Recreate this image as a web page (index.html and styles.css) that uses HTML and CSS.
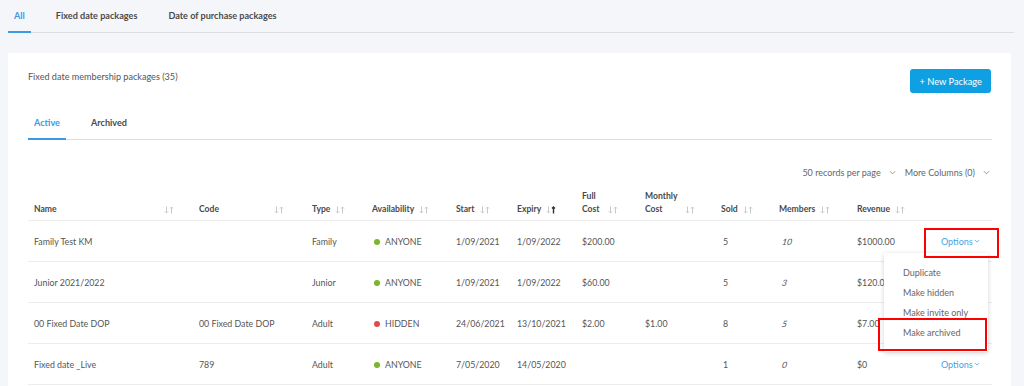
FILE: index.html
```html
<!DOCTYPE html>
<html lang="en">
<head>
    <meta charset="UTF-8">
    <meta name="viewport" content="width=device-width, initial-scale=1.0">
    <title>Membership Packages</title>
    <link rel="stylesheet" href="styles.css">
</head>
<body>
    <div class="page">
        <div class="tabs top-tabs">
            <div class="tab active">All</div>
            <div class="tab">Fixed date packages</div>
            <div class="tab">Date of purchase packages</div>
        </div>

        <div class="card">
            <div class="card-head">
                <div class="card-title">Fixed date membership packages (35)</div>
                <button class="btn">+ New Package</button>
            </div>

            <div class="tabs sub-tabs">
                <div class="tab active">Active</div>
                <div class="tab">Archived</div>
            </div>

            <div class="table-tools">
                <span>50 records per page</span>
                <svg class="chev" viewBox="0 0 8 5"><polyline points="1,1 4,4 7,1"/></svg>
                <span class="more">More Columns (0)</span>
                <svg class="chev" viewBox="0 0 8 5"><polyline points="1,1 4,4 7,1"/></svg>
            </div>

            <table class="packages">
                <colgroup>
                    <col style="width:165px"><col style="width:113px"><col style="width:60px">
                    <col style="width:84px"><col style="width:61px"><col style="width:65px">
                    <col style="width:63px"><col style="width:76px"><col style="width:58px">
                    <col style="width:78px"><col style="width:84px"><col style="width:57px">
                </colgroup>
                <thead>
                    <tr>
                        <th><div class="th-in"><span class="label w-name">Name</span><svg class="sort" viewBox="0 0 10 8"><path d="M2.5 0.5v6.5M1 5.5l1.5 1.5l1.5-1.5"/><path class="up" d="M7.5 7.5v-6.5M6 2.5l1.5-1.5l1.5 1.5"/></svg></div></th>
                        <th><div class="th-in"><span class="label w-code">Code</span><svg class="sort" viewBox="0 0 10 8"><path d="M2.5 0.5v6.5M1 5.5l1.5 1.5l1.5-1.5"/><path class="up" d="M7.5 7.5v-6.5M6 2.5l1.5-1.5l1.5 1.5"/></svg></div></th>
                        <th><div class="th-in"><span class="label">Type</span><svg class="sort" viewBox="0 0 10 8"><path d="M2.5 0.5v6.5M1 5.5l1.5 1.5l1.5-1.5"/><path class="up" d="M7.5 7.5v-6.5M6 2.5l1.5-1.5l1.5 1.5"/></svg></div></th>
                        <th><div class="th-in"><span class="label">Availability</span><svg class="sort" viewBox="0 0 10 8"><path d="M2.5 0.5v6.5M1 5.5l1.5 1.5l1.5-1.5"/><path class="up" d="M7.5 7.5v-6.5M6 2.5l1.5-1.5l1.5 1.5"/></svg></div></th>
                        <th><div class="th-in"><span class="label">Start</span><svg class="sort" viewBox="0 0 10 8"><path d="M2.5 0.5v6.5M1 5.5l1.5 1.5l1.5-1.5"/><path class="up" d="M7.5 7.5v-6.5M6 2.5l1.5-1.5l1.5 1.5"/></svg></div></th>
                        <th><div class="th-in"><span class="label">Expiry</span><svg class="sort sorted" viewBox="0 0 10 8"><path d="M2.5 0.5v6.5M1 5.5l1.5 1.5l1.5-1.5"/><path class="up" d="M7.5 7.5v-6.5M6 2.5l1.5-1.5l1.5 1.5"/></svg></div></th>
                        <th><div class="th-in"><span class="label w-full">Full<br>Cost</span><svg class="sort" viewBox="0 0 10 8"><path d="M2.5 0.5v6.5M1 5.5l1.5 1.5l1.5-1.5"/><path class="up" d="M7.5 7.5v-6.5M6 2.5l1.5-1.5l1.5 1.5"/></svg></div></th>
                        <th><div class="th-in"><span class="label w-monthly">Monthly<br>Cost</span><svg class="sort" viewBox="0 0 10 8"><path d="M2.5 0.5v6.5M1 5.5l1.5 1.5l1.5-1.5"/><path class="up" d="M7.5 7.5v-6.5M6 2.5l1.5-1.5l1.5 1.5"/></svg></div></th>
                        <th><div class="th-in"><span class="label">Sold</span><svg class="sort" viewBox="0 0 10 8"><path d="M2.5 0.5v6.5M1 5.5l1.5 1.5l1.5-1.5"/><path class="up" d="M7.5 7.5v-6.5M6 2.5l1.5-1.5l1.5 1.5"/></svg></div></th>
                        <th><div class="th-in"><span class="label">Members</span><svg class="sort" viewBox="0 0 10 8"><path d="M2.5 0.5v6.5M1 5.5l1.5 1.5l1.5-1.5"/><path class="up" d="M7.5 7.5v-6.5M6 2.5l1.5-1.5l1.5 1.5"/></svg></div></th>
                        <th><div class="th-in"><span class="label">Revenue</span><svg class="sort" viewBox="0 0 10 8"><path d="M2.5 0.5v6.5M1 5.5l1.5 1.5l1.5-1.5"/><path class="up" d="M7.5 7.5v-6.5M6 2.5l1.5-1.5l1.5 1.5"/></svg></div></th>
                        <th></th>
                    </tr>
                </thead>
                <tbody>
                    <tr>
                        <td>Family Test KM</td>
                        <td></td>
                        <td>Family</td>
                        <td><span class="dot green"></span>ANYONE</td>
                        <td>1/09/2021</td>
                        <td>1/09/2022</td>
                        <td>$200.00</td>
                        <td></td>
                        <td class="sold">5</td>
                        <td class="members"><em>10</em></td>
                        <td>$1000.00</td>
                        <td class="opt-cell">
                            <span class="options">Options<svg class="chev blue" viewBox="0 0 8 5"><polyline points="1,1 4,4 7,1"/></svg></span>
                            <div class="mark mark-options"></div>
                            <div class="menu">
                                <div class="menu-item">Duplicate</div>
                                <div class="menu-item">Make hidden</div>
                                <div class="menu-item">Make invite only</div>
                                <div class="menu-item">Make archived</div>
                                <div class="mark mark-archived"></div>
                            </div>
                        </td>
                    </tr>
                    <tr>
                        <td>Junior 2021/2022</td>
                        <td></td>
                        <td>Junior</td>
                        <td><span class="dot green"></span>ANYONE</td>
                        <td>1/09/2021</td>
                        <td>1/09/2022</td>
                        <td>$60.00</td>
                        <td></td>
                        <td class="sold">5</td>
                        <td class="members"><em>3</em></td>
                        <td>$120.00</td>
                        <td class="opt-cell"></td>
                    </tr>
                    <tr>
                        <td>00 Fixed Date DOP</td>
                        <td>00 Fixed Date DOP</td>
                        <td>Adult</td>
                        <td><span class="dot red"></span>HIDDEN</td>
                        <td>24/06/2021</td>
                        <td>13/10/2021</td>
                        <td>$2.00</td>
                        <td>$1.00</td>
                        <td class="sold">8</td>
                        <td class="members"><em>5</em></td>
                        <td>$7.00</td>
                        <td class="opt-cell"></td>
                    </tr>
                    <tr>
                        <td>Fixed date _Live</td>
                        <td>789</td>
                        <td>Adult</td>
                        <td><span class="dot green"></span>ANYONE</td>
                        <td>7/05/2020</td>
                        <td>14/05/2020</td>
                        <td></td>
                        <td></td>
                        <td class="sold">1</td>
                        <td class="members"><em>0</em></td>
                        <td>$0</td>
                        <td class="opt-cell">
                            <span class="options">Options<svg class="chev blue" viewBox="0 0 8 5"><polyline points="1,1 4,4 7,1"/></svg></span>
                        </td>
                    </tr>
                </tbody>
            </table>
        </div>
    </div>
</body>
</html>
```

FILE: styles.css
```css
body {
    margin: 0;
    background-color: #f5f6f9;
    font-family: Lato, "Open Sans", Arial, sans-serif;
    font-size: 9px;
    color: #555;
    overflow: hidden;
}
.page {
    padding: 0 10px 0 8px;
}
.tabs {
    display: flex;
    gap: 19px;
    border-bottom: 1px solid #dcdde0;
}
.tab {
    padding: 0 6px;
    line-height: 31px;
    font-size: 9.1px;
    font-weight: 700;
    color: #4a4a4a;
    border-bottom: 2px solid transparent;
    margin-bottom: -1px;
}
.tab.active {
    color: #3b9ae6;
    border-bottom-color: #3b9ae6;
}
.card {
    margin-top: 20px;
    margin-right: 3px;
    background: #fff;
    padding: 16px 19px 20px 20px;
    min-height: 400px;
}
.card-head {
    display: flex;
    justify-content: space-between;
    align-items: flex-start;
    padding-right: 1px;
}
.card-title {
    margin-top: 2px;
    font-size: 9.1px;
    line-height: 12px;
    color: #555;
}
.btn {
    height: 24px;
    padding: 0 9px;
    border: none;
    border-radius: 3px;
    background-color: #0ea0e2;
    color: #fff;
    font-family: inherit;
    font-size: 9.3px;
    cursor: pointer;
}
.sub-tabs {
    margin-top: 14px;
}
.table-tools {
    display: flex;
    justify-content: flex-end;
    align-items: center;
    margin-top: 22px;
    height: 20px;
    padding-right: 2px;
    font-size: 9px;
    color: #666;
}
.table-tools .more {
    margin-left: 9px;
}
.chev {
    width: 7px;
    height: 5px;
    margin-left: 8px;
    fill: none;
    stroke: #888;
    stroke-width: 1;
}
.chev.blue {
    stroke: #3ba6e8;
    margin-left: 1px;
    width: 6px;
    height: 4px;
}
.packages {
    width: 964px;
    table-layout: fixed;
    border-collapse: collapse;
}
.packages th {
    height: 34px;
    padding: 0 0 4px 6px;
    vertical-align: bottom;
    text-align: left;
    font-size: 8.6px;
    font-weight: 700;
    color: #4a4a4a;
    border-bottom: 1px solid #ececec;
    line-height: 13px;
}
.th-in {
    display: flex;
    align-items: flex-end;
}
.label.w-name { width: 125px; }
.label.w-code { width: 70px; }
.label.w-full { width: 21px; }
.label.w-monthly { width: 35px; }
.sort {
    width: 10px;
    height: 8px;
    margin: 0 0 2px 5px;
    flex: none;
    fill: none;
    stroke: #c8c8c8;
    stroke-width: 1;
}
.sort.sorted .up {
    stroke: #333;
    stroke-width: 1.4;
}
.packages td {
    height: 40px;
    padding: 0 0 0 6px;
    border-bottom: 1px solid #ececec;
    white-space: nowrap;
    font-size: 8.8px;
    color: #555;
}
.packages td.sold {
    padding-left: 8px;
}
.packages td.members {
    padding-left: 9px;
}
.members em {
    display: inline-block;
    font-style: italic;
    transform: skewX(-10deg);
}
.dot {
    display: inline-block;
    width: 6px;
    height: 6px;
    border-radius: 50%;
    margin: 0 5px 1px 2px;
    vertical-align: middle;
}
.dot.green { background: #7ab52b; }
.dot.red { background: #e64848; }
.opt-cell {
    position: relative;
}
.options {
    color: #3ba6e8;
    display: inline-flex;
    align-items: center;
    font-size: 9px;
}
.menu {
    position: absolute;
    left: -51px;
    top: 32px;
    width: 104px;
    padding: 10px 0 9px;
    background: #fff;
    border-radius: 2px;
    box-shadow: 0 1px 5px rgba(0, 0, 0, 0.18);
    z-index: 2;
}
.menu-item {
    line-height: 20px;
    padding-left: 19px;
    font-size: 9px;
    color: #666;
}
.mark {
    position: absolute;
    border: 2px solid #f00;
    box-sizing: border-box;
    z-index: 3;
}
.mark-options {
    left: -11px;
    top: 7px;
    width: 75px;
    height: 30px;
}
.mark-archived {
    left: -6px;
    top: 65px;
    width: 109px;
    height: 33px;
}
```
